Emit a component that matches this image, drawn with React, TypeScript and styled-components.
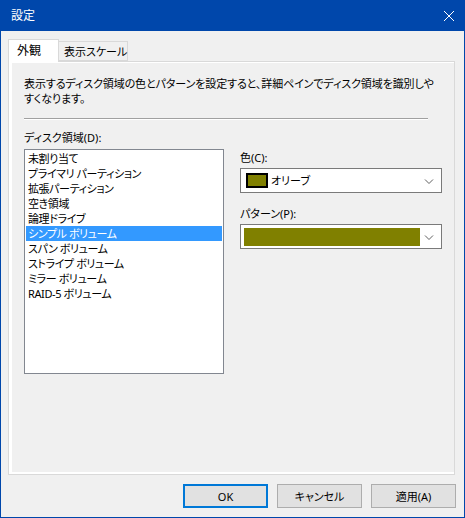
import styled, { createGlobalStyle } from 'styled-components';

const GlobalStyle = createGlobalStyle`
  html, body {
    margin: 0;
    padding: 0;
    background: #f0f0f0;
  }
  body {
    font-family: "Noto Sans", "Noto Sans CJK JP", sans-serif;
    font-size: 11px;
    font-feature-settings: "palt";
    color: #000;
  }
  * { box-sizing: border-box; }
`;

const Window = styled.div`
  width: 465px;
  height: 518px;
  display: flex;
  flex-direction: column;
  background: #f0f0f0;
  border: 1px solid #0047ab;
  border-top: none;
`;

const TitleBar = styled.div`
  height: 31px;
  flex: none;
  display: flex;
  align-items: center;
  justify-content: space-between;
  background: #0047ab;
  color: #fff;
  padding-left: 10px;
`;

const Title = styled.span`
  font-size: 12px;
  line-height: 15px;
`;

const CloseButton = styled.div`
  width: 46px;
  height: 31px;
  display: flex;
  align-items: center;
  justify-content: center;
  padding-left: 16px;
`;

const Body = styled.div`
  flex: 1;
  display: flex;
  flex-direction: column;
  padding: 8px 9px 9px 7px;
  min-height: 0;
`;

const TabRow = styled.div`
  display: flex;
  align-items: flex-end;
  height: 22px;
  flex: none;
`;

const Tab = styled.div<{ $active?: boolean }>`
  position: relative;
  z-index: ${p => (p.$active ? 2 : 1)};
  height: ${p => (p.$active ? '23px' : '20px')};
  margin-bottom: ${p => (p.$active ? '-1px' : '0')};
  padding: ${p => (p.$active ? '3px 0 0 8px' : '2px 0 0 5px')};
  width: ${p => (p.$active ? '51px' : '69px')};
  background: ${p => (p.$active ? '#fff' : '#f0f0f0')};
  border: 1px solid #d9d9d9;
  border-bottom: ${p => (p.$active ? 'none' : '1px solid #d9d9d9')};
  border-left: ${p => (p.$active ? '1px solid #d9d9d9' : 'none')};
  font-size: ${p => (p.$active ? '12px' : '11px')};
  line-height: 15px;
  white-space: nowrap;
`;

const Pane = styled.div`
  flex: 1;
  display: flex;
  background: #fff;
  border: 1px solid #d9d9d9;
  padding: 1px 1px 2px 3px;
  min-height: 0;
`;

const Page = styled.div`
  flex: 1;
  background: #f0f0f0;
  padding: 13px 12px 0 12px;
`;

const Description = styled.p`
  margin: 0;
  line-height: 15px;
  letter-spacing: -0.1px;
  white-space: nowrap;
`;

const Separator = styled.div`
  width: 404px;
  margin-top: 12px;
  border-top: 1px solid #a0a0a0;
  border-bottom: 1px solid #fff;
`;

const Columns = styled.div`
  display: flex;
  gap: 16px;
  margin-top: 10px;
`;

const Column = styled.div<{ $pt?: number }>`
  display: flex;
  flex-direction: column;
  padding-top: ${p => p.$pt ?? 0}px;
`;

const Label = styled.div<{ $gap?: number }>`
  line-height: 15px;
  margin-bottom: ${p => p.$gap ?? 3}px;
`;

const ListBox = styled.div`
  width: 200px;
  height: 225px;
  background: #fff;
  border: 1px solid #828790;
  padding: 1px 1px;
`;

const ListItem = styled.div<{ $selected?: boolean }>`
  height: 15px;
  line-height: 15px;
  padding-left: 2px;
  letter-spacing: -0.4px;
  white-space: nowrap;
  background: ${p => (p.$selected ? '#3399ff' : 'transparent')};
  color: ${p => (p.$selected ? '#fff' : '#000')};
`;

const Combo = styled.div<{ $mb?: number }>`
  width: 202px;
  height: 25px;
  display: flex;
  align-items: center;
  background: #fff;
  border: 1px solid #7a7a7a;
  margin-bottom: ${p => p.$mb ?? 0}px;
`;

const Swatch = styled.div<{ $color: string }>`
  width: 22px;
  height: 15px;
  margin-left: 5px;
  border: 2px solid #000;
  background: ${p => p.$color};
`;

const ComboText = styled.span`
  flex: 1;
  margin-left: 3px;
  line-height: 15px;
`;

const PatternFill = styled.div<{ $color: string }>`
  width: 176px;
  height: 18px;
  margin-left: 3px;
  background: ${p => p.$color};
`;

const Chevron = styled.svg`
  margin-left: auto;
  margin-right: 4px;
  flex: none;
`;

const ButtonRow = styled.div`
  display: flex;
  justify-content: flex-end;
  gap: 9px;
  margin-top: 9px;
  margin-right: -1px;
  flex: none;
`;

const Button = styled.button<{ $default?: boolean }>`
  width: 85px;
  height: 24px;
  font: inherit;
  font-size: 11px;
  color: #000;
  background: #e1e1e1;
  border: ${p => (p.$default ? '2px solid #0078d7' : '1px solid #adadad')};
  padding: 0;
  line-height: 15px;
`;

const ChevronIcon = () => (
  <Chevron width="16" height="16" viewBox="0 0 16 16">
    <path d="M4 6.5 L8 10.5 L12 6.5" fill="none" stroke="#606060" strokeWidth="1" />
  </Chevron>
);

const items = [
  '未割り当て',
  'プライマリ パーティション',
  '拡張パーティション',
  '空き領域',
  '論理ドライブ',
  'シンプル ボリューム',
  'スパン ボリューム',
  'ストライプ ボリューム',
  'ミラー ボリューム',
  'RAID-5 ボリューム',
];

export default function App() {
  const olive = '#808000';
  return (
    <>
      <GlobalStyle />
      <Window>
        <TitleBar>
          <Title>設定</Title>
          <CloseButton>
            <svg width="10" height="10" viewBox="0 0 10 10">
              <path d="M0 0 L10 10 M10 0 L0 10" stroke="#fff" strokeWidth="1" />
            </svg>
          </CloseButton>
        </TitleBar>
        <Body>
          <TabRow>
            <Tab $active>外観</Tab>
            <Tab>表示スケール</Tab>
          </TabRow>
          <Pane>
            <Page>
              <Description>
                表示するディスク領域の色とパターンを設定すると、詳細ペインでディスク領域を識別しや
                <br />
                すくなります。
              </Description>
              <Separator />
              <Columns>
                <Column>
                  <Label $gap={4}>ディスク領域(D):</Label>
                  <ListBox>
                    {items.map((it, i) => (
                      <ListItem key={it} $selected={i === 5}>
                        {it}
                      </ListItem>
                    ))}
                  </ListBox>
                </Column>
                <Column $pt={20}>
                  <Label>色(C):</Label>
                  <Combo $mb={13}>
                    <Swatch $color={olive} />
                    <ComboText>オリーブ</ComboText>
                    <ChevronIcon />
                  </Combo>
                  <Label>パターン(P):</Label>
                  <Combo>
                    <PatternFill $color={olive} />
                    <ChevronIcon />
                  </Combo>
                </Column>
              </Columns>
            </Page>
          </Pane>
          <ButtonRow>
            <Button $default>OK</Button>
            <Button>キャンセル</Button>
            <Button>適用(A)</Button>
          </ButtonRow>
        </Body>
      </Window>
    </>
  );
}
